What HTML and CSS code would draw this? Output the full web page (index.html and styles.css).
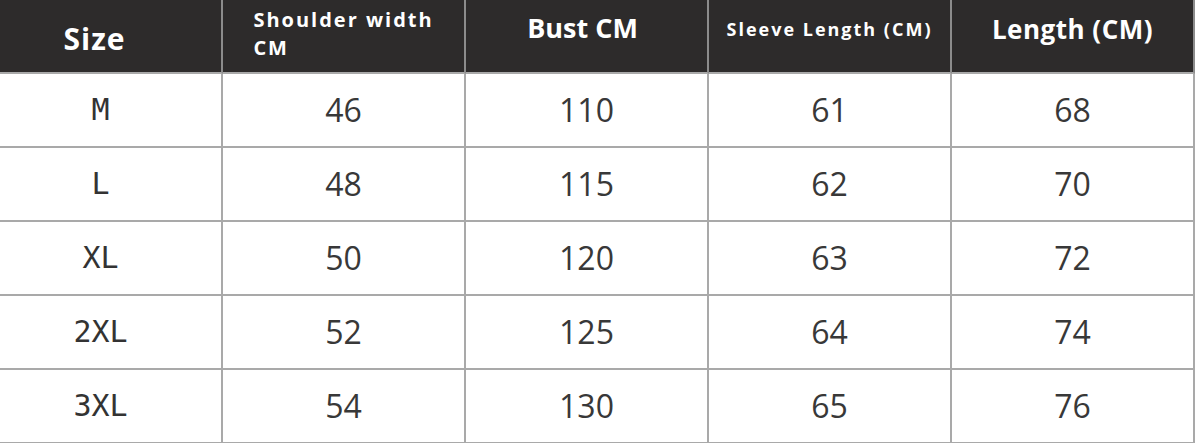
FILE: index.html
```html
<!DOCTYPE html>
<html>
<head>
<meta charset="utf-8">
<link rel="stylesheet" href="styles.css">
</head>
<body>
<div class="sheet">
  <div class="row head">
    <div class="cell"><span class="t h-size">Size</span></div>
    <div class="cell"><span class="t h-shoulder">Shoulder width<br>CM</span></div>
    <div class="cell"><span class="t h-bust">Bust CM</span></div>
    <div class="cell"><span class="t h-sleeve">Sleeve Length (CM)</span></div>
    <div class="cell"><span class="t h-length">Length (CM)</span></div>
  </div>
  <div class="row">
    <div class="cell sz">M</div><div class="cell">46</div><div class="cell">110</div><div class="cell">61</div><div class="cell">68</div>
  </div>
  <div class="row">
    <div class="cell sz">L</div><div class="cell">48</div><div class="cell">115</div><div class="cell">62</div><div class="cell">70</div>
  </div>
  <div class="row">
    <div class="cell sz">XL</div><div class="cell">50</div><div class="cell">120</div><div class="cell">63</div><div class="cell">72</div>
  </div>
  <div class="row">
    <div class="cell sz">2XL</div><div class="cell">52</div><div class="cell">125</div><div class="cell">64</div><div class="cell">74</div>
  </div>
  <div class="row">
    <div class="cell sz">3XL</div><div class="cell">54</div><div class="cell">130</div><div class="cell">65</div><div class="cell">76</div>
  </div>
</div>
</body>
</html>
```

FILE: styles.css
```css
html, body {
  margin: 0;
  padding: 0;
  background: #ffffff;
  overflow: hidden;
}
body {
  width: 1200px;
  height: 443px;
}
.sheet {
  margin-left: -20px;
  display: flex;
  flex-direction: column;
}
.row {
  display: flex;
  height: 74px;
}
.cell {
  width: 241px;
  height: 72px;
  flex: none;
  border-right: 2px solid #a9a9a9;
  border-bottom: 2px solid #a9a9a9;
  display: flex;
  align-items: center;
  justify-content: center;
  font-family: "Open Sans", sans-serif;
  font-size: 32px;
  color: #383838;
  line-height: 1;
}
.sz {
  font-family: "DejaVu Sans Mono", "Liberation Mono", monospace;
  font-size: 30px;
  color: #333333;
}
.head .cell {
  background: #2d2b2b;
  color: #ffffff;
  font-weight: 700;
  border-right-color: #8c8c8c;
  border-bottom-color: #a9a9a9;
}
.t {
  display: inline-block;
}
.h-size {
  font-size: 30px;
  letter-spacing: 1px;
  margin: 6px 12px 0 0;
}
.h-shoulder {
  font-size: 20px;
  letter-spacing: 2px;
  line-height: 28px;
  text-align: left;
  margin: 0 0 5px 0;
}
.h-bust {
  font-size: 27px;
  letter-spacing: 0;
  margin: 0 8px 18px 0;
}
.h-sleeve {
  font-size: 18px;
  letter-spacing: 2px;
  margin: 0 0 15px 0;
}
.h-length {
  font-size: 26px;
  letter-spacing: 0.5px;
  margin: 0 0 15px 0;
}
```
